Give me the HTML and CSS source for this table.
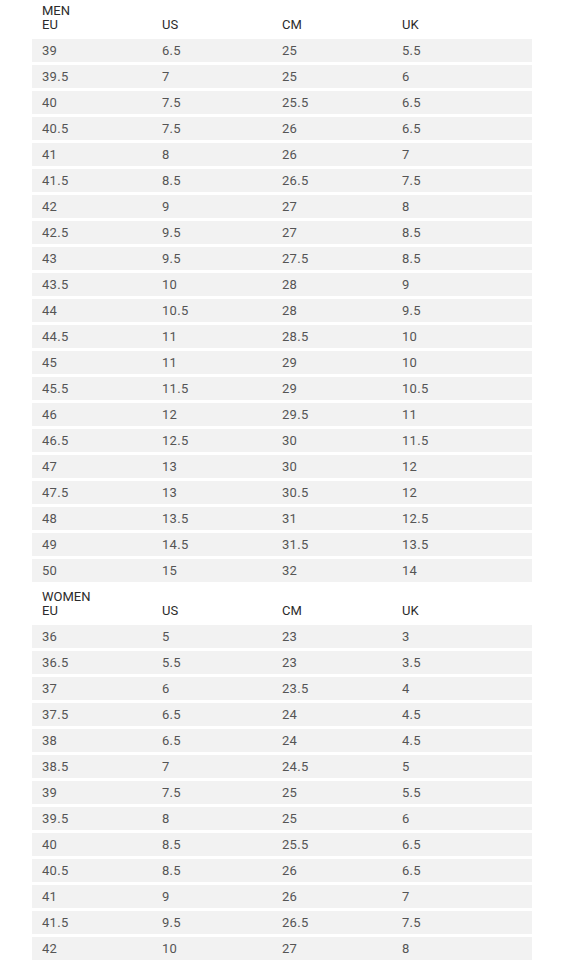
FILE: index.html
```html
<!DOCTYPE html>
<html>
<head>
<meta charset="utf-8">
<link rel="stylesheet" href="styles.css">
</head>
<body>
<div class="chart">
  <div class="head">
    <div class="cell"><span class="group">MEN</span><br>EU</div>
    <div class="cell">US</div>
    <div class="cell">CM</div>
    <div class="cell">UK</div>
  </div>
  <div class="row"><div>39</div><div>6.5</div><div>25</div><div>5.5</div></div>
  <div class="row"><div>39.5</div><div>7</div><div>25</div><div>6</div></div>
  <div class="row"><div>40</div><div>7.5</div><div>25.5</div><div>6.5</div></div>
  <div class="row"><div>40.5</div><div>7.5</div><div>26</div><div>6.5</div></div>
  <div class="row"><div>41</div><div>8</div><div>26</div><div>7</div></div>
  <div class="row"><div>41.5</div><div>8.5</div><div>26.5</div><div>7.5</div></div>
  <div class="row"><div>42</div><div>9</div><div>27</div><div>8</div></div>
  <div class="row"><div>42.5</div><div>9.5</div><div>27</div><div>8.5</div></div>
  <div class="row"><div>43</div><div>9.5</div><div>27.5</div><div>8.5</div></div>
  <div class="row"><div>43.5</div><div>10</div><div>28</div><div>9</div></div>
  <div class="row"><div>44</div><div>10.5</div><div>28</div><div>9.5</div></div>
  <div class="row"><div>44.5</div><div>11</div><div>28.5</div><div>10</div></div>
  <div class="row"><div>45</div><div>11</div><div>29</div><div>10</div></div>
  <div class="row"><div>45.5</div><div>11.5</div><div>29</div><div>10.5</div></div>
  <div class="row"><div>46</div><div>12</div><div>29.5</div><div>11</div></div>
  <div class="row"><div>46.5</div><div>12.5</div><div>30</div><div>11.5</div></div>
  <div class="row"><div>47</div><div>13</div><div>30</div><div>12</div></div>
  <div class="row"><div>47.5</div><div>13</div><div>30.5</div><div>12</div></div>
  <div class="row"><div>48</div><div>13.5</div><div>31</div><div>12.5</div></div>
  <div class="row"><div>49</div><div>14.5</div><div>31.5</div><div>13.5</div></div>
  <div class="row"><div>50</div><div>15</div><div>32</div><div>14</div></div>
  <div class="head head-women">
    <div class="cell"><span class="group">WOMEN</span><br>EU</div>
    <div class="cell">US</div>
    <div class="cell">CM</div>
    <div class="cell">UK</div>
  </div>
  <div class="row"><div>36</div><div>5</div><div>23</div><div>3</div></div>
  <div class="row"><div>36.5</div><div>5.5</div><div>23</div><div>3.5</div></div>
  <div class="row"><div>37</div><div>6</div><div>23.5</div><div>4</div></div>
  <div class="row"><div>37.5</div><div>6.5</div><div>24</div><div>4.5</div></div>
  <div class="row"><div>38</div><div>6.5</div><div>24</div><div>4.5</div></div>
  <div class="row"><div>38.5</div><div>7</div><div>24.5</div><div>5</div></div>
  <div class="row"><div>39</div><div>7.5</div><div>25</div><div>5.5</div></div>
  <div class="row"><div>39.5</div><div>8</div><div>25</div><div>6</div></div>
  <div class="row"><div>40</div><div>8.5</div><div>25.5</div><div>6.5</div></div>
  <div class="row"><div>40.5</div><div>8.5</div><div>26</div><div>6.5</div></div>
  <div class="row"><div>41</div><div>9</div><div>26</div><div>7</div></div>
  <div class="row"><div>41.5</div><div>9.5</div><div>26.5</div><div>7.5</div></div>
  <div class="row"><div>42</div><div>10</div><div>27</div><div>8</div></div>
</div>
</body>
</html>
```

FILE: styles.css
```css
html, body {
  margin: 0;
  padding: 0;
  background: #ffffff;
}
body {
  font-family: Roboto, "Liberation Sans", Arial, sans-serif;
  font-size: 13px;
}
.chart {
  width: 500px;
  margin-left: 32px;
  display: flex;
  flex-direction: column;
  gap: 3px;
}
.head,
.row {
  display: grid;
  grid-template-columns: 120px 120px 120px 1fr;
}
.head {
  height: 36px;
  color: #2b2b2b;
  font-weight: 400;
  line-height: 14px;
}
.head-women {
  height: 37px;
}
.head .cell {
  align-self: end;
  padding-left: 10px;
  padding-bottom: 4px;
}
.row {
  height: 23px;
  line-height: 23px;
  background: #f2f2f2;
  color: #555555;
  letter-spacing: 0.3px;
}
.row > div {
  padding-left: 10px;
}
```
